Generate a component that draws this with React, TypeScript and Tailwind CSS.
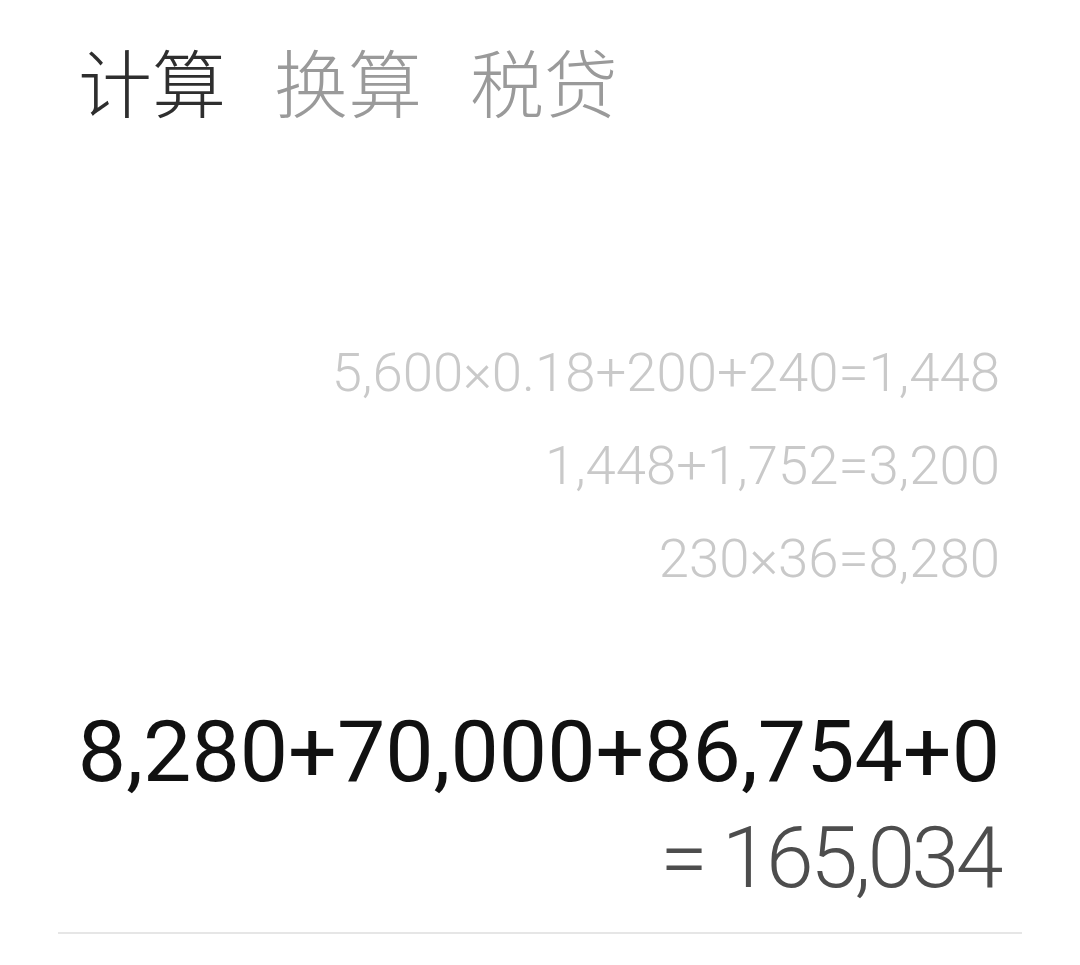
import React from 'react'

const tabs = [
  { label: '计算', active: true },
  { label: '换算', active: false },
  { label: '税贷', active: false },
]

const history = ['5,600×0.18+200+240=1,448', '1,448+1,752=3,200', '230×36=8,280']

export default function App() {
  return (
    <div className="w-[1080px] h-[965px] bg-white overflow-hidden px-[58px] flex flex-col">
      <div
        className="flex gap-[48px] pl-[20px] pt-[43px] pb-[4px] text-[74px] leading-none font-light"
        style={{ fontFamily: '"Noto Sans CJK SC", "Noto Sans", sans-serif' }}
      >
        {tabs.map(t => (
          <span key={t.label} className={t.active ? 'text-[#2e2e2e]' : 'text-[#9a9a9a]'}>
            {t.label}
          </span>
        ))}
      </div>

      <div
        className="mt-[205px] pr-[22px] flex flex-col items-end text-[54.5px] leading-[93px] font-light text-[#c9c9c9]"
        style={{ fontFamily: 'Roboto, "Liberation Sans", sans-serif' }}
      >
        {history.map(line => (
          <div key={line}>{line}</div>
        ))}
      </div>

      <div
        className="mt-[94px] pr-[22px] flex flex-col items-end leading-[106px]"
        style={{ fontFamily: 'Roboto, "Liberation Sans", sans-serif' }}
      >
        <div className="text-[86px] text-[#111111]">8,280+70,000+86,754+0</div>
        <div className="text-[86px] text-[#4d4d4d] font-light tracking-[-3.5px]">= 165,034</div>
      </div>

      <div className="mt-[21px] border-t-2 border-[#e6e6e6]" />
    </div>
  )
}
